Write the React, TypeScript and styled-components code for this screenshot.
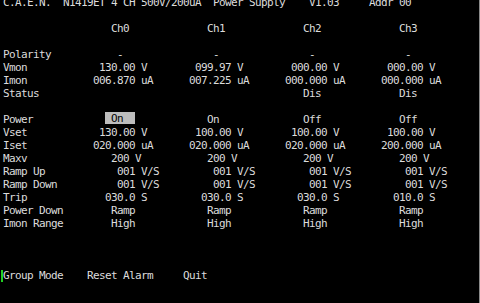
import React from "react";
import styled, { createGlobalStyle } from "styled-components";

const CW = 6; // character cell width
const RH = 13; // row height

const Global = createGlobalStyle`
  html, body { margin: 0; padding: 0; background: #000; }
  body { overflow: hidden; }
`;

const Screen = styled.div`
  position: relative;
  width: 479px;
  height: 303px;
  background: #000;
  border-right: 1px solid #8a8a8a;
  box-sizing: content-box;
  overflow: hidden;
  color: #dcdcdc;
  font-family: "DejaVu Sans Mono", "Liberation Mono", monospace;
  font-size: 11px;
  letter-spacing: -0.622px;
  line-height: ${RH}px;
`;

const Content = styled.div`
  display: flex;
  flex-direction: column;
  margin-top: -4px;
  padding-left: 3px;
`;

const Line = styled.div`
  height: ${RH}px;
  white-space: pre;
`;

const Row = styled.div`
  display: grid;
  grid-template-columns: ${15 * CW}px repeat(4, ${16 * CW}px);
  height: ${RH}px;
  white-space: pre;
`;

const Label = styled.div``;

const Cell = styled.div<{ $indent: number }>`
  padding-left: ${(p) => p.$indent * CW}px;
`;

const Highlight = styled.span`
  display: inline-block;
  width: ${5 * CW}px;
  height: 12px;
  margin-top: -1px;
  background: #bdbdbd;
  color: #000;
  vertical-align: top;
  line-height: ${RH}px;
`;

const Menu = styled.div`
  position: relative;
  display: grid;
  grid-template-columns: ${14 * CW}px ${16 * CW}px auto;
  height: ${RH}px;
  white-space: pre;
`;

const MenuItem = styled.div``;

const Cursor = styled.div`
  position: absolute;
  left: -2px;
  top: 1px;
  width: 2px;
  height: 12px;
  background: #22d022;
`;

type RowDef = { label: string; indent: number; values: string[] } | null;

const rows: RowDef[] = [
  { label: "Polarity", indent: 4, values: ["-", "-", "-", "-"] },
  { label: "Vmon", indent: 1, values: ["130.00 V", "099.97 V", "000.00 V", "000.00 V"] },
  { label: "Imon", indent: 0, values: ["006.870 uA", "007.225 uA", "000.000 uA", "000.000 uA"] },
  { label: "Status", indent: 3, values: ["", "", "Dis", "Dis"] },
  null,
  { label: "Power", indent: 3, values: ["On", "On", "Off", "Off"] },
  { label: "Vset", indent: 1, values: ["130.00 V", "100.00 V", "100.00 V", "100.00 V"] },
  { label: "Iset", indent: 0, values: ["020.000 uA", "020.000 uA", "020.000 uA", "200.000 uA"] },
  { label: "Maxv", indent: 3, values: ["200 V", "200 V", "200 V", "200 V"] },
  { label: "Ramp Up", indent: 4, values: ["001 V/S", "001 V/S", "001 V/S", "001 V/S"] },
  { label: "Ramp Down", indent: 4, values: ["001 V/S", "001 V/S", "001 V/S", "001 V/S"] },
  { label: "Trip", indent: 2, values: ["030.0 S", "030.0 S", "030.0 S", "010.0 S"] },
  { label: "Power Down", indent: 3, values: ["Ramp", "Ramp", "Ramp", "Ramp"] },
  { label: "Imon Range", indent: 3, values: ["High", "High", "High", "High"] },
];

export default function App() {
  return (
    <>
      <Global />
      <Screen>
        <Content>
          <Line>{"C.A.E.N.  N1419ET 4 CH 500V/200uA  Power Supply    V1.03     Addr 00"}</Line>
          <Line />
          <Row>
            <Label />
            {["Ch0", "Ch1", "Ch2", "Ch3"].map((c) => (
              <Cell key={c} $indent={3}>{c}</Cell>
            ))}
          </Row>
          <Line />
          {rows.map((r, i) =>
            r === null ? (
              <Line key={i} />
            ) : (
              <Row key={i}>
                <Label>{r.label}</Label>
                {r.values.map((v, j) =>
                  r.label === "Power" && j === 0 ? (
                    <Cell key={j} $indent={2}>
                      <Highlight>{" On  "}</Highlight>
                    </Cell>
                  ) : (
                    <Cell key={j} $indent={r.indent}>{v}</Cell>
                  )
                )}
              </Row>
            )
          )}
          <Line />
          <Line />
          <Line />
          <Menu>
            <Cursor />
            <MenuItem>Group Mode</MenuItem>
            <MenuItem>Reset Alarm</MenuItem>
            <MenuItem>Quit</MenuItem>
          </Menu>
        </Content>
      </Screen>
    </>
  );
}
